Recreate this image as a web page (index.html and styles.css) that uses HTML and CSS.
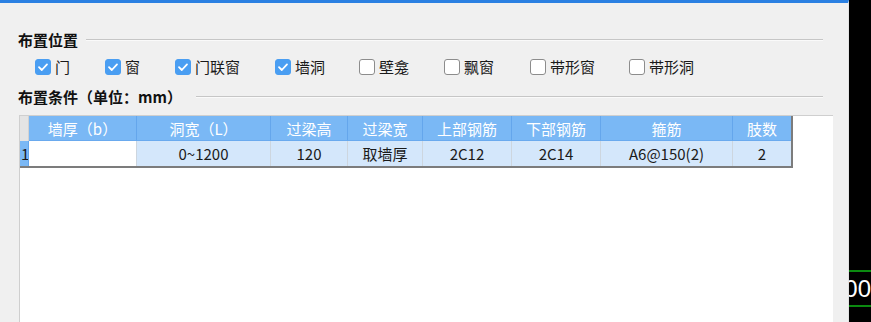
FILE: index.html
```html
<!DOCTYPE html>
<html lang="zh-CN">
<head>
<meta charset="utf-8">
<title>布置</title>
<link rel="stylesheet" href="styles.css">
</head>
<body>
<div class="screen">
  <div class="dialog">
    <div class="group-title">
      <span class="group-label">布置位置</span>
      <span class="group-line group-line--a"></span>
    </div>
    <div class="checks">
      <label class="check"><span class="box box--on"><svg viewBox="0 0 16 16" width="16" height="16"><path d="M4 8.2 L6.8 11 L12 5.4" fill="none" stroke="#fff" stroke-width="1.8" stroke-linecap="round" stroke-linejoin="round"/></svg></span>门</label>
      <label class="check"><span class="box box--on"><svg viewBox="0 0 16 16" width="16" height="16"><path d="M4 8.2 L6.8 11 L12 5.4" fill="none" stroke="#fff" stroke-width="1.8" stroke-linecap="round" stroke-linejoin="round"/></svg></span>窗</label>
      <label class="check"><span class="box box--on"><svg viewBox="0 0 16 16" width="16" height="16"><path d="M4 8.2 L6.8 11 L12 5.4" fill="none" stroke="#fff" stroke-width="1.8" stroke-linecap="round" stroke-linejoin="round"/></svg></span>门联窗</label>
      <label class="check"><span class="box box--on"><svg viewBox="0 0 16 16" width="16" height="16"><path d="M4 8.2 L6.8 11 L12 5.4" fill="none" stroke="#fff" stroke-width="1.8" stroke-linecap="round" stroke-linejoin="round"/></svg></span>墙洞</label>
      <label class="check"><span class="box"></span>壁龛</label>
      <label class="check"><span class="box"></span>飘窗</label>
      <label class="check"><span class="box"></span>带形窗</label>
      <label class="check"><span class="box"></span>带形洞</label>
    </div>
    <div class="group-title group-title--second">
      <span class="group-label">布置条件（单位：mm）</span>
      <span class="group-line group-line--b"></span>
    </div>
    <div class="grid-box">
      <div class="grid">
        <div class="cell corner"></div>
        <div class="cell head">墙厚（b）</div>
        <div class="cell head">洞宽（L）</div>
        <div class="cell head">过梁高</div>
        <div class="cell head">过梁宽</div>
        <div class="cell head">上部钢筋</div>
        <div class="cell head">下部钢筋</div>
        <div class="cell head">箍筋</div>
        <div class="cell head head--last">肢数</div>

        <div class="cell rowhead">1</div>
        <div class="cell data data--edit"></div>
        <div class="cell data">0~1200</div>
        <div class="cell data">120</div>
        <div class="cell data">取墙厚</div>
        <div class="cell data">2C12</div>
        <div class="cell data">2C14</div>
        <div class="cell data">A6@150(2)</div>
        <div class="cell data data--last">2</div>
      </div>
    </div>
  </div>
  <div class="side">
    <div class="side-band"><span class="side-num">1000</span></div>
  </div>
</div>
</body>
</html>
```

FILE: styles.css
```css
* { box-sizing: border-box; }

html, body {
  margin: 0;
  padding: 0;
  width: 871px;
  height: 322px;
  overflow: hidden;
  background: #000;
  font-family: "Noto Sans CJK SC", "Noto Sans", sans-serif;
}

.screen {
  display: flex;
  width: 871px;
  height: 322px;
}

.dialog {
  width: 849px;
  height: 322px;
  background: #f0f0f0;
  border-top: 3px solid #2b80e2;
  border-right: 1px solid #e2e2e2;
  padding: 28px 25px 0 18px;
  display: flex;
  flex-direction: column;
}

.group-title {
  display: flex;
  align-items: center;
  height: 18px;
}

.group-title--second {
  margin-top: 12px;
}

.group-label {
  font-size: 15px;
  font-weight: 700;
  color: #111;
  line-height: 18px;
  white-space: nowrap;
}

.group-line {
  flex: 1;
  height: 0;
  border-top: 1px solid #c6c6c6;
  border-bottom: 1px solid #fafafa;
}

.group-line--a { margin-left: 8px; }
.group-line--b { margin-left: 14px; }

.checks {
  margin-top: 9px;
  padding-left: 17px;
  height: 18px;
  display: grid;
  grid-template-columns: 70px 70px 100px 84px 85px 86px 99px auto;
  align-items: center;
}

.check {
  display: flex;
  align-items: center;
  gap: 4px;
  font-size: 15px;
  line-height: 18px;
  color: #1a1a1a;
  white-space: nowrap;
}

.box {
  width: 16px;
  height: 16px;
  border-radius: 3px;
  border: 1px solid #8c8c8c;
  background: #fff;
  display: block;
  flex: none;
}

.box--on {
  border-color: #4a9ef2;
  background: #4a9ef2;
}

.box svg {
  display: block;
  margin: -1px 0 0 -1px;
}

.grid-box {
  margin-top: 9px;
  margin-left: 1px;
  margin-right: -10px;
  flex: 1;
  background: #fff;
  border-top: 1px solid #cfcfcf;
  border-left: 1px solid #cfcfcf;
}

.grid {
  display: inline-grid;
  grid-template-columns: 9px 108px 134px 77px 75px 89px 89px 132px 58px;
  grid-template-rows: 25px 25px;
  border-right: 2px solid #7c7c7c;
  border-bottom: 2px solid #7c7c7c;
}

.cell {
  display: flex;
  align-items: center;
  justify-content: center;
  font-size: 15px;
  white-space: nowrap;
  overflow: hidden;
}

.corner {
  background: #e4e4e4;
  border-right: 1px solid #d2d2d2;
}

.head {
  background: #7ab8f5;
  color: #fff;
  border-right: 1px solid #64a6ec;
  border-bottom: 1px solid #6aaaee;
}

.head--last { border-right: none; }

.rowhead {
  background: #7ab8f5;
  color: #1a1a1a;
  justify-content: flex-start;
  padding-left: 1px;
  border-right: 1px solid #64a6ec;
}

.data {
  background: #d4e7fb;
  color: #1a1a1a;
  border-right: 1px solid #cdd6df;
}

.data--edit { background: #fff; }
.data--last { border-right: none; }

.side {
  flex: 1;
  background: #000;
  padding-top: 270px;
  overflow: hidden;
}

.side-band {
  height: 37px;
  border-top: 2px solid #0b8a10;
  border-bottom: 2px solid #0b8a10;
  overflow: hidden;
  display: flex;
  align-items: center;
}

.side-num {
  color: #fff;
  font-family: "Liberation Sans", sans-serif;
  font-size: 24px;
  line-height: 26px;
  margin-left: -18px;
  white-space: nowrap;
}
```
